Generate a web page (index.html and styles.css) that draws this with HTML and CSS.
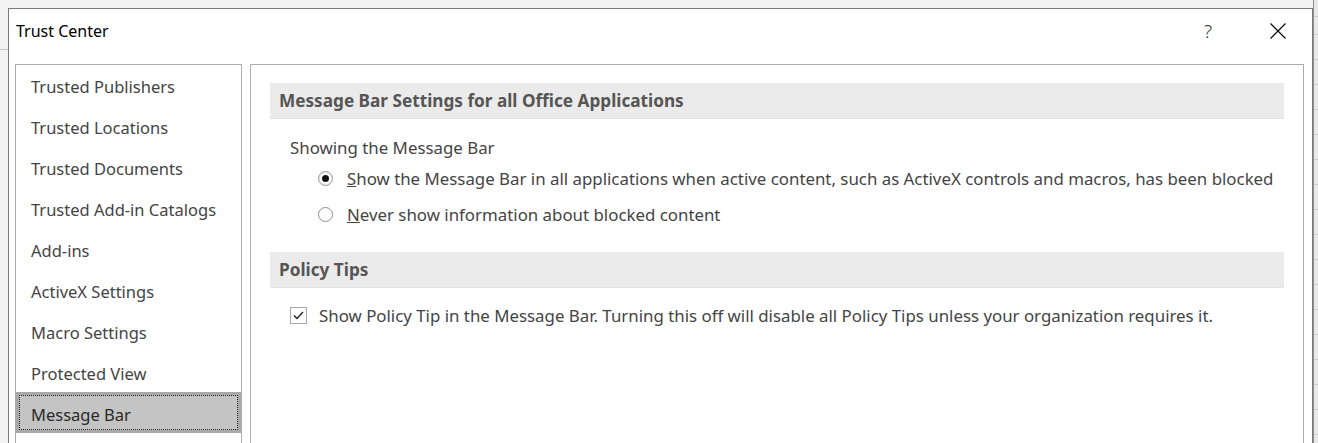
FILE: index.html
```html
<!DOCTYPE html>
<html lang="en">
<head>
<meta charset="utf-8">
<title>Trust Center</title>
<link rel="stylesheet" href="styles.css">
</head>
<body>
<div class="desktop">
  <div class="sheet-edge"></div>
  <div class="left-line"></div>
  <div class="dialog">
    <div class="titlebar">
      <span class="title">Trust Center</span>
      <div class="title-buttons">
        <span class="help">?</span>
        <svg class="close" width="16" height="16" viewBox="0 0 16 16" aria-hidden="true">
          <path d="M0.5 0.5 L15.5 15.5 M15.5 0.5 L0.5 15.5" stroke="#000" stroke-width="1.1" fill="none"/>
        </svg>
      </div>
    </div>
    <div class="body">
      <nav class="nav">
        <div class="nav-item">Trusted Publishers</div>
        <div class="nav-item">Trusted Locations</div>
        <div class="nav-item">Trusted Documents</div>
        <div class="nav-item">Trusted Add-in Catalogs</div>
        <div class="nav-item">Add-ins</div>
        <div class="nav-item">ActiveX Settings</div>
        <div class="nav-item">Macro Settings</div>
        <div class="nav-item">Protected View</div>
        <div class="nav-item selected"><span class="focus">Message Bar</span></div>
      </nav>
      <section class="panel">
        <div class="section-head">Message Bar Settings for all Office Applications</div>
        <div class="group">
          <div class="group-label">Showing the Message Bar</div>
          <div class="option">
            <span class="radio checked"></span>
            <span class="opt-text"><u>S</u>how the Message Bar in all applications when active content, such as ActiveX controls and macros, has been blocked</span>
          </div>
          <div class="option">
            <span class="radio"></span>
            <span class="opt-text"><u>N</u>ever show information about blocked content</span>
          </div>
        </div>
        <div class="section-head">Policy Tips</div>
        <div class="check-row">
          <span class="checkbox">
            <svg width="11" height="9" viewBox="0 0 11 9" aria-hidden="true"><path d="M1 4.5 L4 7.5 L10 1" stroke="#222" stroke-width="1.4" fill="none"/></svg>
          </span>
          <span class="opt-text">Show Policy Tip in the Message Bar. Turning this off will disable all Policy Tips unless your organization requires it.</span>
        </div>
      </section>
    </div>
  </div>
</div>
</body>
</html>
```

FILE: styles.css
```css
html, body {
  margin: 0;
  padding: 0;
  width: 1318px;
  height: 443px;
  overflow: hidden;
}

body {
  background: #f3f3f3;
  font-family: "Noto Sans", "Open Sans", sans-serif;
}

.desktop {
  position: relative;
  width: 1318px;
  height: 443px;
  overflow: hidden;
}

.sheet-edge {
  position: absolute;
  left: 1313px;
  top: 0;
  width: 5px;
  height: 443px;
  background-color: #e8e8e8;
  background-image: repeating-linear-gradient(to bottom, transparent 0, transparent 9px, #cfcfcf 9px, #cfcfcf 10px, transparent 10px, transparent 25px);
  background-position: 0 25px;
  border-left: 1px solid #8e8e8e;
}

.left-line {
  position: absolute;
  left: 0;
  top: 49px;
  width: 8px;
  height: 1px;
  background: #c8c8c8;
}

.dialog {
  position: absolute;
  left: 8px;
  top: 8px;
  width: 1303px;
  height: 460px;
  background: #fff;
  border: 1px solid #7a7a7a;
  display: flex;
  flex-direction: column;
}

.titlebar {
  height: 55px;
  display: flex;
  align-items: flex-start;
  justify-content: space-between;
  padding: 0 26px 0 7px;
  box-sizing: border-box;
}

.title {
  font-size: 16px;
  line-height: 22px;
  margin-top: 11px;
  color: #000;
}

.title-buttons {
  display: flex;
  align-items: flex-start;
  gap: 58px;
}

.help {
  font-size: 19px;
  line-height: 24px;
  margin-top: 10px;
  color: #333;
  font-weight: 300;
}

.close {
  display: block;
  margin-top: 14px;
}

.body {
  flex: 1;
  display: flex;
  gap: 8px;
  padding: 0 8px 0 6px;
}

.nav {
  width: 225px;
  border: 1px solid #acacac;
  display: flex;
  flex-direction: column;
  flex-shrink: 0;
}

.nav-item {
  height: 41px;
  line-height: 41px;
  padding-left: 15px;
  padding-top: 1px;
  font-size: 16.5px;
  color: #444;
  box-sizing: border-box;
  white-space: nowrap;
}

.nav-item.selected {
  background: #c4c4c4;
  box-shadow: inset 0 0 0 3px #a9a9a9;
  padding: 3px;
  margin-top: -1px;
}

.nav-item.selected .focus {
  display: block;
  height: 100%;
  box-sizing: border-box;
  border: 1px dotted #222;
  padding-left: 11px;
  padding-top: 2px;
  line-height: 33px;
  color: #2a2a2a;
}

.panel {
  flex: 1;
  border: 1px solid #acacac;
  padding: 18px 19px 0 19px;
}

.section-head {
  height: 36px;
  line-height: 35px;
  background: #ebebeb;
  border-bottom: 1px solid #e2e2e2;
  box-sizing: border-box;
  padding-left: 9px;
  font-size: 17.2px;
  font-weight: 700;
  color: #555;
}

.group {
  padding: 16px 0 20px 20px;
}

.group-label {
  font-size: 16.85px;
  color: #444;
  line-height: 24px;
  padding-top: 1px;
}

.option {
  display: flex;
  align-items: center;
  height: 36px;
  padding-left: 28px;
  gap: 14px;
}

.option:first-of-type {
  margin-top: 2px;
}

.opt-text {
  font-size: 16.85px;
  color: #444;
  white-space: nowrap;
}

.radio {
  width: 15px;
  height: 15px;
  border-radius: 50%;
  border: 1px solid #8f8f8f;
  box-sizing: border-box;
  display: flex;
  align-items: center;
  justify-content: center;
  flex-shrink: 0;
  margin-top: 1px;
}

.radio.checked {
  border-color: #9a9a9a;
  box-shadow: inset 0 0 0 1px #e6e6e6;
}

.radio.checked::after {
  content: "";
  width: 7px;
  height: 7px;
  border-radius: 50%;
  background: #111;
}

.check-row {
  display: flex;
  align-items: center;
  gap: 12px;
  padding: 16px 0 0 20px;
}

.checkbox {
  width: 17px;
  height: 17px;
  border: 1.5px solid #a8a8a8;
  box-sizing: border-box;
  display: flex;
  align-items: center;
  justify-content: center;
  flex-shrink: 0;
}

.checkbox svg {
  display: block;
}
```
